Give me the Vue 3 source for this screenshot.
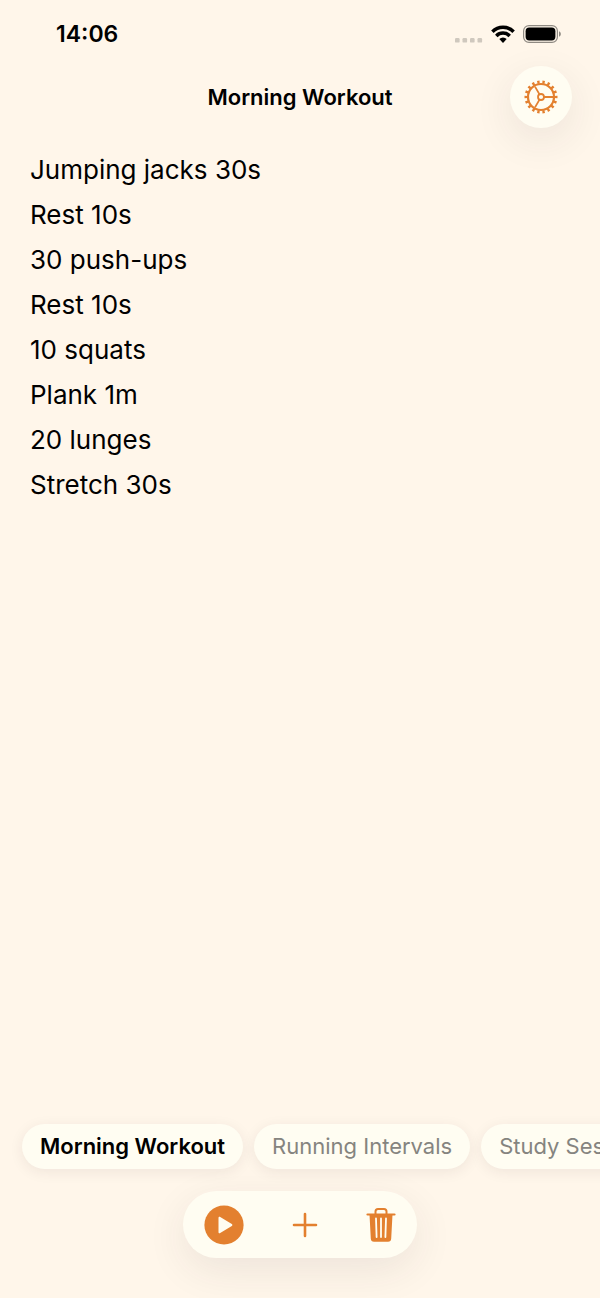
<script setup>
import { ref, computed } from 'vue'

const routines = ref([
  {
    name: 'Morning Workout',
    text: 'Jumping jacks 30s\nRest 10s\n30 push-ups\nRest 10s\n10 squats\nPlank 1m\n20 lunges\nStretch 30s'
  },
  { name: 'Running Intervals', text: '' },
  { name: 'Study Session', text: '' }
])

const activeIndex = ref(0)
const active = computed(() => routines.value[activeIndex.value])

function addRoutine() {
  routines.value.push({ name: 'New Routine', text: '' })
  activeIndex.value = routines.value.length - 1
}

function removeRoutine() {
  if (routines.value.length < 2) return
  routines.value.splice(activeIndex.value, 1)
  activeIndex.value = 0
}
</script>

<template>
  <div class="screen">
    <div class="status-bar">
      <span class="time">14:06</span>
      <div class="status-icons">
        <svg class="signal" width="28" height="18" viewBox="0 0 28 18" aria-hidden="true">
          <rect x="0" y="13" width="4.6" height="4.6" rx="1.2" />
          <rect x="7.5" y="13" width="4.6" height="4.6" rx="1.2" />
          <rect x="15" y="13" width="4.6" height="4.6" rx="1.2" />
          <rect x="22.5" y="13" width="4.6" height="4.6" rx="1.2" />
        </svg>
        <svg width="24" height="18" viewBox="0 0 24 18" fill="none" stroke="#000" stroke-width="3.5" aria-hidden="true">
          <path d="M1.4 6.7a15 15 0 0 1 21.2 0" />
          <path d="M5.3 10.9a9.4 9.4 0 0 1 13.4 0" />
          <path d="M12 18l-3.700-3.900a5.200 5.200 0 0 1 7.400 0z" fill="#000" stroke="none" />
        </svg>
        <svg width="38" height="18" viewBox="0 0 38 18" aria-hidden="true">
          <rect x="0.6" y="0.6" width="33.8" height="16.8" rx="5.4" fill="none" stroke="#8f8a83" stroke-width="1.2" />
          <rect x="2.6" y="2.6" width="29.8" height="12.8" rx="3.6" />
          <path d="M36 6.2c1.1.4 1.8 1.5 1.8 2.8s-.7 2.4-1.8 2.8z" fill="#8f8a83" />
        </svg>
      </div>
    </div>

    <header class="header">
      <h1 class="title">{{ active.name }}</h1>
      <button class="settings" type="button" aria-label="Settings">
        <svg width="34" height="34" viewBox="0 0 34 34" fill="none" stroke="currentColor" aria-hidden="true">
          <circle cx="17" cy="17" r="15" stroke-width="3" pathLength="36" stroke-dasharray="0.9 1.1" stroke-dashoffset="0.45" />
          <circle cx="17" cy="17" r="13" stroke-width="2.2" />
          <circle cx="17" cy="17" r="3" stroke-width="1.8" />
          <path d="M20 17h9M15.5 14.4l-4.5-7.8M15.5 19.6l-4.5 7.8" stroke-width="1.8" />
        </svg>
      </button>
    </header>

    <main class="editor">
      <textarea v-model="active.text" aria-label="Routine steps" spellcheck="false"></textarea>
    </main>

    <nav class="tabs" aria-label="Routines">
      <button
        v-for="(routine, i) in routines"
        :key="i"
        type="button"
        class="tab"
        :class="{ active: i === activeIndex }"
        @click="activeIndex = i"
      >
        {{ routine.name }}
      </button>
    </nav>

    <footer class="footer">
      <div class="toolbar">
        <button type="button" aria-label="Start">
          <svg width="40" height="40" viewBox="0 0 40 40" aria-hidden="true">
            <circle cx="20" cy="20" r="19.6" fill="currentColor" />
            <path d="M14.500 12.800v14.400c0 1 .9 1.400 1.700.9l11.600-7.100c.8-.5.8-1.500 0-2L16.200 11.900c-.8-.5-1.700-.1-1.700.9z" fill="#fffdf2" />
          </svg>
        </button>
        <button type="button" aria-label="Add routine" @click="addRoutine">
          <svg width="26" height="26" viewBox="0 0 26 26" fill="none" stroke="currentColor" stroke-width="2.6" stroke-linecap="round" aria-hidden="true">
            <path d="M13 2v22M2 13h22" />
          </svg>
        </button>
        <button type="button" aria-label="Delete routine" @click="removeRoutine">
          <svg width="30" height="36" viewBox="0 0 30 36" fill="none" stroke-linecap="round" aria-hidden="true">
            <path d="M9.500 7V4.500A2.500 2.500 0 0 1 12 2h6a2.500 2.500 0 0 1 2.500 2.500V7" stroke="currentColor" stroke-width="2" />
            <path d="M1.500 7.500h27" stroke="currentColor" stroke-width="2.200" />
            <path d="M3.500 7.500h23l-1.300 24.200a3.200 3.200 0 0 1-3.200 3H8a3.200 3.200 0 0 1-3.200-3z" fill="currentColor" />
            <path d="M10 11.500l.6 18.500M15 11.500V30M20 11.500L19.400 30" stroke="#fffdf2" stroke-width="1.800" />
          </svg>
        </button>
      </div>
    </footer>
  </div>
</template>

<style>
body {
  margin: 0;
  background: #fff6ea;
}
</style>

<style scoped>
.screen {
  display: flex;
  flex-direction: column;
  min-height: 100vh;
  background: #fff6ea;
  color: #000;
  font-family: Inter, "Liberation Sans", sans-serif;
  overflow: hidden;
}
button {
  border: none;
  padding: 0;
  font: inherit;
  background: none;
  color: #e3802f;
  cursor: pointer;
}
svg {
  display: block;
}
.status-bar {
  display: flex;
  align-items: center;
  justify-content: space-between;
  padding: 20px 39px 18px 56px;
  line-height: 28px;
}
.time {
  font-size: 23px;
  font-weight: 600;
}
.status-icons {
  display: flex;
  gap: 8px;
}
.signal {
  fill: #cfc8be;
}
.header {
  display: grid;
  grid-template-columns: 62px 1fr 62px;
  align-items: center;
  padding: 0 28px;
}
.title {
  grid-column: 2;
  margin: 0;
  font-size: 22px;
  font-weight: 600;
  line-height: 28px;
  text-align: center;
}
.settings {
  display: flex;
  align-items: center;
  justify-content: center;
  width: 62px;
  height: 62px;
  border-radius: 50%;
  background: #fffdf2;
  box-shadow: 0 12px 40px rgba(60, 40, 50, 0.09);
}
.editor {
  display: flex;
  flex: 1;
  padding: 19px 30px 0;
}
.editor textarea {
  flex: 1;
  border: none;
  padding: 0;
  outline: none;
  resize: none;
  background: transparent;
  color: inherit;
  font-family: inherit;
  font-size: 26px;
  line-height: 45px;
}
.tabs {
  display: flex;
  gap: 11px;
  padding: 22px;
  overflow-x: auto;
  scrollbar-width: none;
}
.tab {
  flex: none;
  padding: 0 18px;
  border-radius: 23px;
  background: #fffdf2;
  box-shadow: 0 3px 14px rgba(60, 40, 50, 0.08);
  color: #85847f;
  font-size: 22px;
  line-height: 45px;
}
.tab.active {
  color: #000;
  font-weight: 600;
}
.footer {
  display: flex;
  justify-content: center;
  padding-bottom: 40px;
}
.toolbar {
  display: flex;
  align-items: center;
  gap: 48px;
  height: 67px;
  padding: 0 21px;
  border-radius: 34px;
  background: #fffdf2;
  box-shadow: 0 12px 40px rgba(60, 40, 50, 0.09);
}
</style>
